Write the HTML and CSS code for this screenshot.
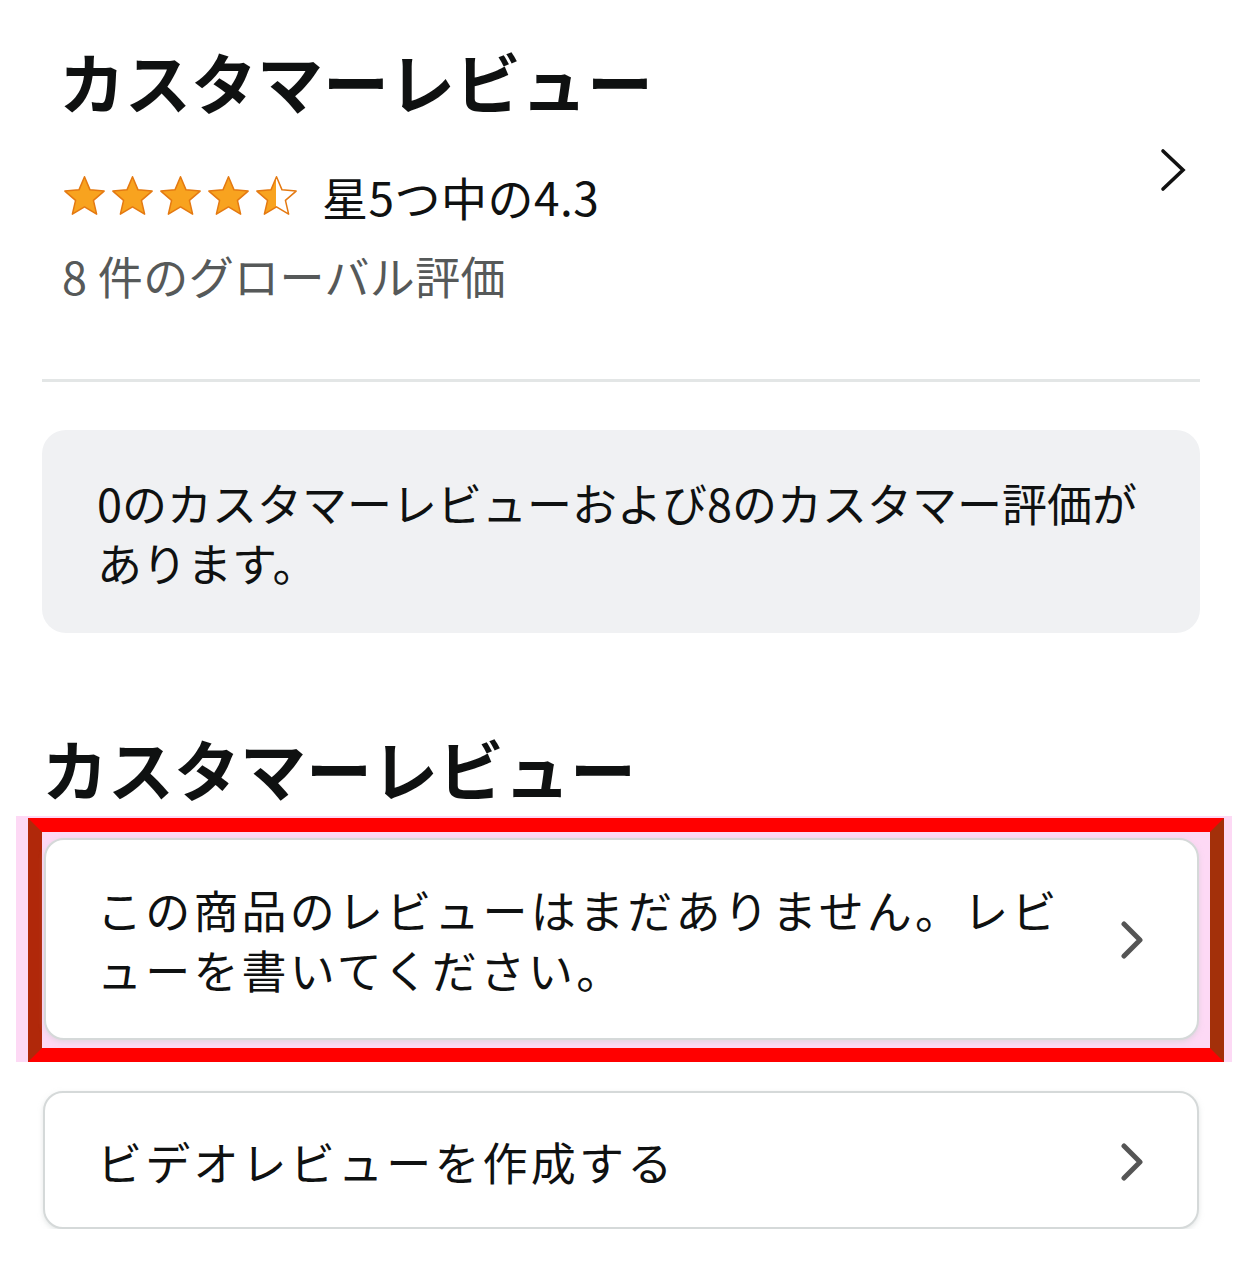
FILE: index.html
```html
<!DOCTYPE html>
<html lang="ja">
<head>
<meta charset="utf-8">
<title>カスタマーレビュー</title>
<link rel="stylesheet" href="styles.css">
</head>
<body>
<main class="page">
  <section class="summary">
    <div class="summary-main">
      <h1 class="title title-1">カスタマーレビュー</h1>
      <div class="rating">
        <span class="stars">
          <svg class="star" viewBox="0 0 24 24"><polygon points="12,1.5 14.94,8.45 22.46,9.1 16.76,14.05 18.47,21.4 12,17.5 5.53,21.4 7.24,14.05 1.54,9.1 9.06,8.45" class="star-full"/></svg>
          <svg class="star" viewBox="0 0 24 24"><polygon points="12,1.5 14.94,8.45 22.46,9.1 16.76,14.05 18.47,21.4 12,17.5 5.53,21.4 7.24,14.05 1.54,9.1 9.06,8.45" class="star-full"/></svg>
          <svg class="star" viewBox="0 0 24 24"><polygon points="12,1.5 14.94,8.45 22.46,9.1 16.76,14.05 18.47,21.4 12,17.5 5.53,21.4 7.24,14.05 1.54,9.1 9.06,8.45" class="star-full"/></svg>
          <svg class="star" viewBox="0 0 24 24"><polygon points="12,1.5 14.94,8.45 22.46,9.1 16.76,14.05 18.47,21.4 12,17.5 5.53,21.4 7.24,14.05 1.54,9.1 9.06,8.45" class="star-full"/></svg>
          <svg class="star" viewBox="0 0 24 24"><defs><linearGradient id="half" x1="0" x2="1" y1="0" y2="0"><stop offset="0.5" stop-color="#f8a31f"/><stop offset="0.5" stop-color="#ffffff"/></linearGradient></defs><polygon points="12,1.5 14.94,8.45 22.46,9.1 16.76,14.05 18.47,21.4 12,17.5 5.53,21.4 7.24,14.05 1.54,9.1 9.06,8.45" class="star-half"/></svg>
        </span>
        <span class="rating-text">星5つ中の4.3</span>
      </div>
      <div class="count">8 件のグローバル評価</div>
    </div>
    <svg class="chev-top" viewBox="0 0 30 44"><polyline points="5,3 25,22 5,41" fill="none" stroke="#111" stroke-width="3.6" stroke-linecap="round" stroke-linejoin="miter"/></svg>
  </section>

  <hr class="divider">

  <div class="notice">0のカスタマーレビューおよび8のカスタマー評価があります。</div>

  <h2 class="title title-2">カスタマーレビュー</h2>

  <div class="hl-wrap">
    <div class="hl"><div class="hl-frame"></div></div>
    <a class="card card-tall" href="#">
      <span class="card-text">この商品のレビューはまだありません。レビューを書いてください。</span>
      <svg class="card-chev" viewBox="0 0 24 38"><polyline points="4,3 20,19 4,35" fill="none" stroke="#555" stroke-width="5" stroke-linecap="round" stroke-linejoin="round"/></svg>
    </a>
  </div>

  <a class="card card-short" href="#">
    <span class="card-text">ビデオレビューを作成する</span>
    <svg class="card-chev" viewBox="0 0 24 38"><polyline points="4,3 20,19 4,35" fill="none" stroke="#555" stroke-width="5" stroke-linecap="round" stroke-linejoin="round"/></svg>
  </a>
</main>
</body>
</html>
```

FILE: styles.css
```css
html, body {
  margin: 0;
  background: #ffffff;
}

body {
  font-family: "Noto Sans CJK JP", "Noto Sans", sans-serif;
  color: #0f1111;
}

.page {
  padding: 40px 42px 0;
}

.summary {
  display: flex;
  justify-content: space-between;
  align-items: flex-start;
  padding-left: 20px;
}

.title {
  margin: 0;
  font-size: 66px;
  font-weight: 700;
  line-height: 80px;
  color: #0f1111;
}

.title-1 {
  margin-left: -3px;
}

.rating {
  display: flex;
  align-items: center;
  gap: 23px;
  margin-top: 46px;
  height: 60px;
}

.stars {
  display: flex;
  gap: 3px;
}

.star {
  width: 45px;
  height: 45px;
  display: block;
}

.star-full {
  fill: #f8a31f;
  stroke: #e47911;
  stroke-width: 0.8;
  stroke-linejoin: round;
}

.star-half {
  fill: url(#half);
  stroke: #e47911;
  stroke-width: 0.8;
  stroke-linejoin: round;
}

.rating-text {
  font-size: 46px;
  line-height: 60px;
  letter-spacing: 0.5px;
}

.count {
  margin-top: 20px;
  font-size: 45px;
  line-height: 60px;
  letter-spacing: 0.4px;
  color: #565959;
}

.chev-top {
  width: 30px;
  height: 44px;
  margin-top: 108px;
  margin-right: 12px;
  flex-shrink: 0;
}

.divider {
  margin: 73px 0 0;
  border: 0;
  height: 3px;
  background: #e3e6e6;
}

.notice {
  margin-top: 48px;
  background: #f0f1f3;
  border-radius: 24px;
  padding: 43px 55px 40px;
  font-size: 45px;
  line-height: 60px;
}

.title-2 {
  margin-top: 94px;
  margin-left: 0;
}

.hl-wrap {
  position: relative;
  margin-top: 31px;
}

.hl {
  position: absolute;
  left: -26px;
  top: -22px;
  width: 1216px;
  height: 246px;
  background: #fdd9f5;
  z-index: 0;
}

.hl-frame {
  position: absolute;
  left: 12px;
  top: 2px;
  width: 1196px;
  height: 244px;
  box-sizing: border-box;
  border: 14px solid #ff0000;
  border-left-color: #b0280a;
  border-right-color: #a3300a;
}

.card {
  position: relative;
  z-index: 1;
  display: flex;
  align-items: center;
  justify-content: space-between;
  margin: 0 1px 0 2px;
  border: 2px solid #d5d9d9;
  border-radius: 20px;
  background: #ffffff;
  box-shadow: 0 2px 5px rgba(200, 205, 205, 0.5);
  color: #0f1111;
  text-decoration: none;
}

.card-tall {
  padding: 40px 53px 38px 51px;
}

.card-short {
  margin-top: 51px;
  margin-left: 1px;
  padding: 39px 53px 35px 52px;
}

.card-text {
  width: 990px;
  font-size: 45px;
  line-height: 60px;
  letter-spacing: 3.2px;
}

.card-chev {
  width: 24px;
  height: 38px;
  flex-shrink: 0;
}
```
